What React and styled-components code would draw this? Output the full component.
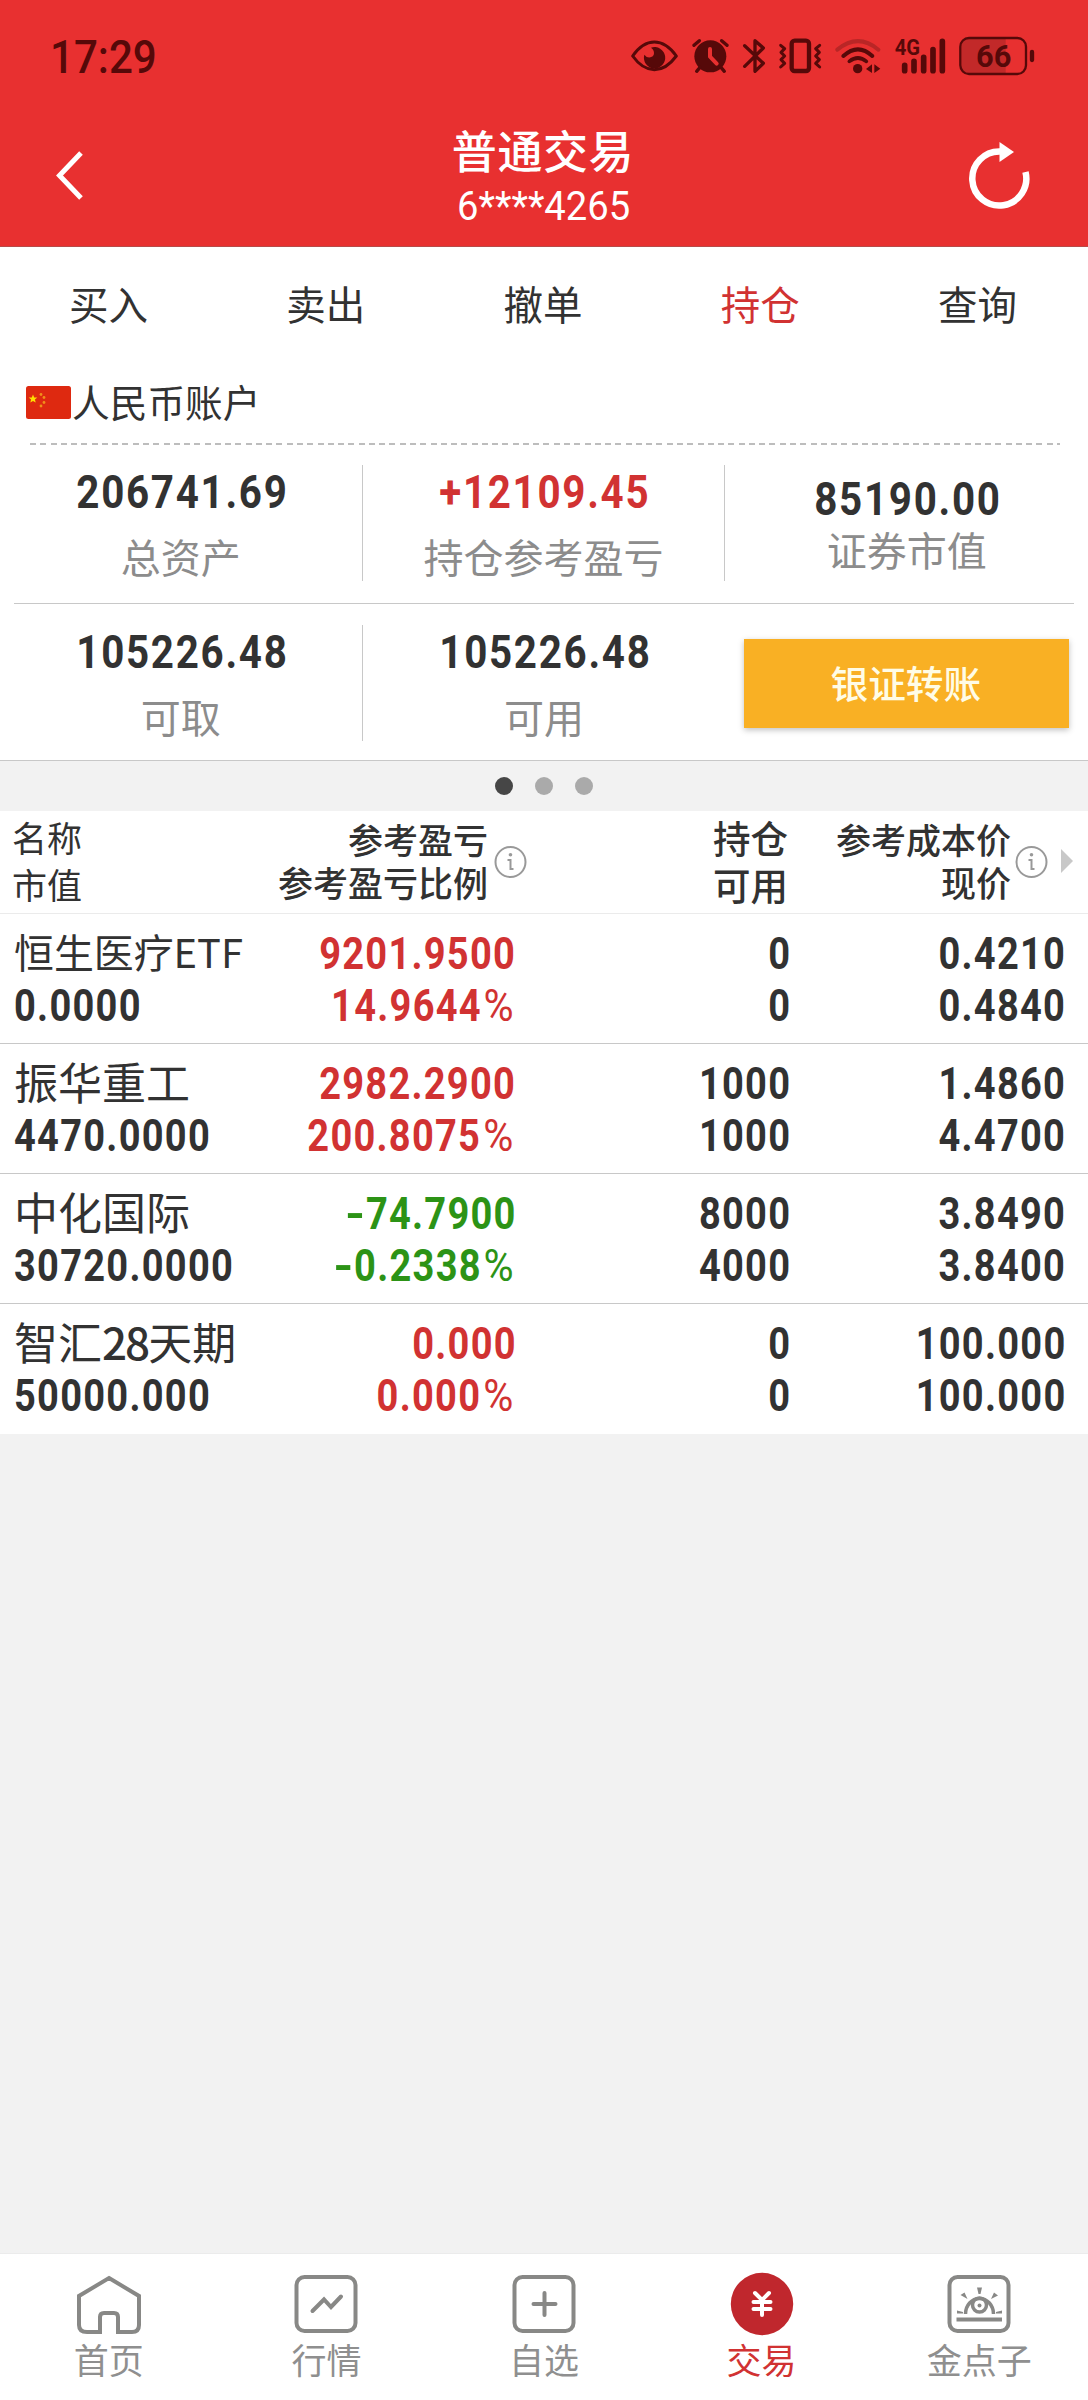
import React from 'react';
import styled, { createGlobalStyle } from 'styled-components';

const GlobalStyle = createGlobalStyle`
    * {
        box-sizing: border-box;
    }

    body {
        margin: 0;
        background: #f2f2f2;
        color: #323232;
        font-family: 'Noto Sans CJK SC', sans-serif;
    }
`;

const INK = '#560909';
const RED = '#d13232';
const GREEN = '#2c9316';

const Page = styled.div`
    display: flex;
    flex-direction: column;
    width: 1088px;
    height: 2400px;
    background: #f2f2f2;
`;

/* header */

const Header = styled.header`
    height: 247px;
    background: #e83030;
    border-bottom: 1px solid #b84a48;
`;

const StatusBar = styled.div`
    display: flex;
    align-items: center;
    justify-content: space-between;
    height: 108px;
    padding: 4px 53px 0 50px;
`;

const Clock = styled.div`
    height: 54px;
    line-height: 58px;
    font-family: Roboto, sans-serif;
    font-weight: 500;
    font-size: 45.5px;
    color: ${INK};
    transform: scaleX(0.925);
    transform-origin: left;
    white-space: nowrap;
`;

const StatusIcons = styled.div`
    display: flex;
    align-items: center;
`;

const TitleBar = styled.div`
    display: grid;
    grid-template-columns: 200px 1fr 200px;
    height: 138px;
`;

const BackButton = styled.div`
    padding: 41px 0 0 53px;
`;

const RefreshButton = styled.div`
    display: flex;
    justify-content: flex-end;
    padding: 28px 53px 0 0;
`;

const Titles = styled.div`
    display: flex;
    flex-direction: column;
    align-items: center;
    padding-top: 12px;
    color: #fff;
`;

const Title = styled.div`
    font-size: 45px;
    line-height: 60px;
    font-weight: 500;
    letter-spacing: 0.6px;
    margin-right: 2px;
`;

const AccountNo = styled.div`
    font-family: Roboto, sans-serif;
    font-size: 40px;
    line-height: 54px;
    transform: scaleX(0.955);
`;

/* tabs */

const Tabs = styled.nav`
    display: flex;
    height: 110px;
    padding-right: 2px;
    background: #fff;
`;

const Tab = styled.div`
    flex: 1;
    text-align: center;
    font-size: 39.5px;
    line-height: 112px;
    color: ${props => (props.$active ? RED : '#323232')};
`;

/* account summary */

const Summary = styled.section`
    height: 404px;
    background: #fff;
    border-bottom: 1px solid #c8c8c8;
`;

const Currency = styled.div`
    display: flex;
    align-items: center;
    height: 86px;
    padding: 5px 0 0 26px;
    font-size: 37.7px;
    line-height: 60px;
`;

const CurrencyName = styled.span`
    margin: -4px 0 0 1px;
`;

const Dashes = styled.div`
    height: 2px;
    margin: 0 28px 0 30px;
    background: repeating-linear-gradient(to right, #bdbdbd 0 6px, transparent 6px 10.27px);
`;

const Figures = styled.div`
    display: grid;
    grid-template-columns: 1fr 1fr 1fr;
    height: ${props => props.$height}px;
    padding-top: ${props => props.$top}px;
`;

const Rule = styled.div`
    height: 1px;
    margin: 0 14px;
    background: #c8c8c8;
`;

const Figure = styled.div`
    display: flex;
    flex-direction: column;
    align-items: center;
    height: 116px;
    gap: ${props => (props.$tight ? 0 : 14)}px;
    padding-top: ${props => (props.$tight ? 7 : 0)}px;
    border-right: ${props => (props.$last ? 'none' : '1px solid #c8c8c8')};
`;

const FigureValue = styled.div`
    font-family: Roboto, sans-serif;
    font-weight: 700;
    font-size: 46.9px;
    line-height: 53px;
    height: 52px;
    letter-spacing: 2px;
    margin-right: -3px;
    transform: scaleX(0.86);
    color: ${props => props.$color || '#323232'};
`;

const FigureLabel = styled.div`
    font-size: 40px;
    line-height: 60px;
    margin-top: -5px;
    color: #8c8c8c;
`;

const TransferButton = styled.div`
    width: 325px;
    height: 89px;
    margin: 14px 0 0 19px;
    background: #f9b024;
    box-shadow: 0 2px 6px rgba(0, 0, 0, 0.25);
    color: #fffce6;
    font-size: 37.7px;
    font-weight: 500;
    line-height: 86px;
    text-align: center;
    text-indent: -2px;
`;

const Pager = styled.div`
    display: flex;
    justify-content: center;
    align-items: center;
    gap: 22px;
    height: 50px;
`;

const Dot = styled.span`
    width: 18px;
    height: 18px;
    border-radius: 50%;
    background: ${props => (props.$active ? '#464646' : '#aaa')};
`;

/* positions table */

const Table = styled.section`
    background: #fff;
`;

const HeadRow = styled.div`
    display: grid;
    grid-template-columns: 200px 327px 261px 300px;
    height: 103px;
    border-bottom: 1px solid #ebebeb;
`;

const HeadCell = styled.div`
    display: flex;
    align-items: center;
    justify-content: ${props => (props.$left ? 'flex-start' : 'flex-end')};
    padding-left: ${props => (props.$left ? 12 : 0)}px;
`;

const HeadText = styled.div`
    font-size: ${props => props.$size || 35}px;
    line-height: ${props => props.$line || 43}px;
    font-weight: ${props => props.$weight || 400};
    text-align: ${props => (props.$left ? 'left' : 'right')};
    white-space: nowrap;
    margin: -5px ${props => props.$gap || 0}px 0 0;
`;

const Row = styled.div`
    display: grid;
    grid-template-columns: 230px 285px 275px 275px;
    height: 130px;
    padding-top: 14px;
    border-bottom: ${props => (props.$last ? 'none' : '1px solid #c8c8c8')};
`;

const Cell = styled.div`
    display: flex;
    flex-direction: column;
    align-items: ${props => (props.$left ? 'flex-start' : 'flex-end')};
    padding-left: ${props => (props.$left ? 14 : 0)}px;
    color: ${props => props.$color || '#323232'};
`;

const StockName = styled.div`
    font-size: ${props => (props.$small ? 39.9 : 44)}px;
    line-height: 46px;
    height: 52px;
    white-space: nowrap;
`;

const NameDigits = styled.span`
    font-weight: 500;
    letter-spacing: -2px;
`;

const Amount = styled.div`
    font-family: Roboto, sans-serif;
    font-weight: 700;
    font-size: 45px;
    line-height: 52px;
    letter-spacing: 1.5px;
    margin-right: -1.5px;
    transform: scaleX(0.845);
    transform-origin: ${props => (props.$left ? 'left' : 'right')};
    white-space: nowrap;
`;

const Percent = styled.span`
    display: inline-block;
    margin: 0 2px 0 5px;
    font-weight: 400;
    transform: scaleX(1.08);
    transform-origin: right;
`;

const Minus = styled.span`
    display: inline-block;
    transform: scaleX(1.35);
    margin: 0 2px 0 4px;
`;

/* bottom bar */

const BottomBar = styled.nav`
    display: flex;
    height: 147px;
    margin-top: auto;
    background: #fff;
    border-top: 1px solid #ebebeb;
`;

const BottomItem = styled.div`
    flex: 1;
    display: flex;
    flex-direction: column;
    align-items: center;
    padding-top: 17px;
    font-size: 35px;
    line-height: 40px;
    color: ${props => (props.$active ? RED : '#8f8f8f')};
`;

const EyeIcon = () => (
    <svg width="47" height="40" viewBox="90 108 141 120">
        <path d="M95 168 Q124 126 160 126 T226 168 Q196 209 160 209 T95 168Z" fill="none" stroke={INK} strokeWidth="9" strokeLinejoin="round" />
        <path d="M150 143 A32 32 0 1 1 130 164 Q137 174 148 172 Q163 168 158 153 Q156 147 150 143Z" fill={INK} />
    </svg>
);

const AlarmIcon = () => (
    <svg width="37" height="40" viewBox="273 108 111 120">
        <circle cx="328" cy="169" r="48" fill={INK} />
        <path d="M279 136 L295 122 M362 122 L378 136" stroke={INK} strokeWidth="10" strokeLinecap="round" />
        <path d="M297 202 L287 214 M360 202 L370 214" stroke={INK} strokeWidth="10" strokeLinecap="round" />
        <path d="M327 147 V170 L347 191" fill="none" stroke="#e83030" strokeWidth="12" strokeLinecap="round" strokeLinejoin="round" />
    </svg>
);

const BluetoothIcon = () => (
    <svg width="24" height="40" viewBox="423 108 72 120">
        <path d="M431 137 L487 190 L462 214 V122 L487 144 L431 199" fill="none" stroke={INK} strokeWidth="10" strokeLinecap="round" strokeLinejoin="round" />
    </svg>
);

const VibrateIcon = () => (
    <svg width="44" height="40" viewBox="532 108 132 120">
        <rect x="573" y="122" width="52" height="91" rx="9" fill="none" stroke={INK} strokeWidth="13" />
        <path d="M540 136 L552 146 L541 157 L552 168 L541 179 L552 190 L540 201" fill="none" stroke={INK} strokeWidth="9" strokeLinecap="round" strokeLinejoin="round" />
        <path d="M657 136 L645 146 L656 157 L645 168 L656 179 L645 190 L657 201" fill="none" stroke={INK} strokeWidth="9" strokeLinecap="round" strokeLinejoin="round" />
    </svg>
);

const WifiIcon = () => (
    <svg width="46" height="40" viewBox="704 108 138 120">
        <path d="M711 149 Q773 98 834 149" fill="none" stroke="#b92626" strokeWidth="12" strokeLinecap="round" />
        <path d="M729 168 Q773 128 816 168" fill="none" stroke={INK} strokeWidth="12" strokeLinecap="round" />
        <path d="M747 184 Q773 164 798 184" fill="none" stroke={INK} strokeWidth="11" strokeLinecap="round" />
        <circle cx="772" cy="206" r="14" fill={INK} />
        <path d="M797 207 L815 193 V219Z M822 193 L840 206 L822 219Z" fill={INK} />
    </svg>
);

const Signal = styled.svg`
    overflow: visible;
`;

const SignalIcon = () => (
    <Signal width="52" height="40" viewBox="880 108 156 120">
        <text x="882" y="165" fontFamily="Roboto, sans-serif" fontWeight="700" fontSize="67" textLength="76" lengthAdjust="spacingAndGlyphs" fill={INK}>
            4G
        </text>
        <path d="M912 196 V212 M940 184 V212 M969 172 V212 M997 149 V212 M1025 124 V212" stroke={INK} strokeWidth="17" strokeLinecap="round" />
    </Signal>
);

const BatteryIcon = () => (
    <svg width="76" height="40" viewBox="1076 108 228 120">
        <path d="M1105 117 H1216 V219 H1105 Q1084 219 1084 198 V138 Q1084 117 1105 117Z" fill="#c22929" />
        <rect x="1080" y="114" width="197" height="108" rx="26" fill="none" stroke={INK} strokeWidth="7" />
        <path d="M1295 156 V180" stroke={INK} strokeWidth="13" strokeLinecap="round" />
        <text x="1127" y="202" fontFamily="Roboto, sans-serif" fontWeight="700" fontSize="93" textLength="106" lengthAdjust="spacingAndGlyphs" fill={INK}>
            66
        </text>
    </svg>
);

const IconGap = styled.span`
    width: ${props => props.$w}px;
`;

const BackIcon = () => (
    <svg width="32" height="54" viewBox="0 0 32 54">
        <path d="M28 4 L6.500 26.500 L28 49" fill="none" stroke="#fff" strokeWidth="5" />
    </svg>
);

const RefreshIcon = () => (
    <svg width="72" height="76" viewBox="0 0 72 76">
        <path d="M37 15.500 A27 27 0 1 0 62.500 36" fill="none" stroke="#fff" strokeWidth="6.500" />
        <path d="M36.500 6 L51 16 L36.500 26Z" fill="#fff" />
    </svg>
);

const FlagIcon = () => (
    <svg width="45" height="33" viewBox="0 0 45 33">
        <rect width="45" height="33" rx="2.500" fill="#de2910" />
        <path d="M7 8.500 L8.200 11.400 L11.300 11.600 L8.900 13.600 L9.700 16.600 L7 15 L4.300 16.600 L5.100 13.600 L2.700 11.600 L5.800 11.400Z" fill="#ffde00" />
        <g fill="#f0901a">
            <circle cx="15" cy="8.500" r="1.400" />
            <circle cx="18" cy="11.500" r="1.400" />
            <circle cx="18" cy="16.500" r="1.400" />
            <circle cx="15" cy="20" r="1.400" />
        </g>
    </svg>
);

const InfoIcon = () => (
    <svg width="33" height="34" viewBox="0 0 33 34">
        <circle cx="16.500" cy="17" r="15" fill="none" stroke="#999" strokeWidth="2" />
        <circle cx="16.500" cy="9.800" r="1.800" fill="#999" />
        <path d="M13.500 15 H16.500 V24 H19.500" fill="none" stroke="#999" strokeWidth="2" />
    </svg>
);

const MoreArrow = styled.span`
    margin: -2px 15px 0 13px;
    border-left: 12px solid #c8c8c8;
    border-top: 12px solid transparent;
    border-bottom: 12px solid transparent;
`;

const HomeIcon = () => (
    <svg width="68" height="68" viewBox="0 0 68 68">
        <path d="M34 7 L64 25 V54 Q64 61 57 61 H43 V46 Q43 42 39 42 H29 Q25 42 25 46 V61 H12 Q4 61 4 54 V25Z" fill="none" stroke="#888886" strokeWidth="4" />
    </svg>
);

const Frame = () => <rect x="4.500" y="6" width="59" height="54" rx="8" fill="none" stroke="#888886" strokeWidth="4" />;

const QuotesIcon = () => (
    <svg width="68" height="68" viewBox="0 0 68 68">
        <Frame />
        <path d="M20.500 40 L32 28.500 L39 36 L49 25.500" fill="none" stroke="#888886" strokeWidth="4" strokeLinecap="round" />
    </svg>
);

const WatchIcon = () => (
    <svg width="68" height="68" viewBox="0 0 68 68">
        <Frame />
        <path d="M23.500 33 H45.500 M34.500 22 V44" stroke="#888886" strokeWidth="4" strokeLinecap="round" />
    </svg>
);

const TradeIcon = () => (
    <svg width="68" height="68" viewBox="0 0 68 68">
        <circle cx="34" cy="33" r="31.200" fill="#c0272d" />
        <path d="M27 22 L34 29 L41 22 M34 29 V44 M25.500 31 H42.500 M25.500 38 H42.500" fill="none" stroke="#fff" strokeWidth="4" strokeLinecap="round" />
    </svg>
);

const IdeaIcon = () => (
    <svg width="68" height="68" viewBox="0 0 68 68">
        <Frame />
        <path d="M11.500 48.500 H57" stroke="#888886" strokeWidth="4" />
        <path d="M20.500 43 A14 15.500 0 0 1 48.500 43" fill="none" stroke="#888886" strokeWidth="3.500" />
        <circle cx="34.500" cy="34" r="7" fill="none" stroke="#888886" strokeWidth="3.500" />
        <circle cx="34.500" cy="34.500" r="2" fill="#888886" />
        <path d="M32 16.500 H37 L35.500 23 H33.500Z M15.500 24 L19.500 21.500 L22.500 28Z M53 24.500 L49 21.500 L46 28Z M12 39.500 L18 41 V42.500 H12Z M57 39.500 L51 41 V42.500 H57Z" fill="#888886" />
    </svg>
);

const tabs = ['买入', '卖出', '撤单', '持仓', '查询'];

const positions = [
    {
        name: '恒生医疗ETF',
        value: '0.0000',
        profit: '9201.9500',
        rate: '14.9644',
        held: '0',
        usable: '0',
        cost: '0.4210',
        price: '0.4840',
    },
    {
        name: '振华重工',
        value: '4470.0000',
        profit: '2982.2900',
        rate: '200.8075',
        held: '1000',
        usable: '1000',
        cost: '1.4860',
        price: '4.4700',
    },
    {
        name: '中化国际',
        value: '30720.0000',
        profit: '-74.7900',
        rate: '-0.2338',
        held: '8000',
        usable: '4000',
        cost: '3.8490',
        price: '3.8400',
    },
    {
        name: '智汇28天期',
        value: '50000.000',
        profit: '0.000',
        rate: '0.000',
        held: '0',
        usable: '0',
        cost: '100.000',
        price: '100.000',
    },
];

const bottomItems = [
    { label: '首页', icon: <HomeIcon /> },
    { label: '行情', icon: <QuotesIcon /> },
    { label: '自选', icon: <WatchIcon /> },
    { label: '交易', icon: <TradeIcon />, active: true },
    { label: '金点子', icon: <IdeaIcon /> },
];

const signed = text =>
    text.startsWith('-') ? (
        <>
            <Minus>-</Minus>
            {text.slice(1)}
        </>
    ) : (
        text
    );

const nameParts = name =>
    name.split(/(\d+)/).map((part, i) => (i % 2 ? <NameDigits key={i}>{part}</NameDigits> : part));

const Position = ({ item, last }) => (
    <Row $last={last}>
        <Cell $left>
            <StockName $small={item.name.length > 6}>{nameParts(item.name)}</StockName>
            <Amount $left>{item.value}</Amount>
        </Cell>
        <Cell $color={item.profit.startsWith('-') ? GREEN : RED}>
            <Amount>{signed(item.profit)}</Amount>
            <Amount>
                {signed(item.rate)}
                <Percent>%</Percent>
            </Amount>
        </Cell>
        <Cell>
            <Amount>{item.held}</Amount>
            <Amount>{item.usable}</Amount>
        </Cell>
        <Cell>
            <Amount>{item.cost}</Amount>
            <Amount>{item.price}</Amount>
        </Cell>
    </Row>
);

const App = () => {
    return (
        <Page>
            <GlobalStyle />
            <Header>
                <StatusBar>
                    <Clock>17:29</Clock>
                    <StatusIcons>
                        <EyeIcon />
                        <IconGap $w={14} />
                        <AlarmIcon />
                        <IconGap $w={13} />
                        <BluetoothIcon />
                        <IconGap $w={12} />
                        <VibrateIcon />
                        <IconGap $w={13} />
                        <WifiIcon />
                        <IconGap $w={13} />
                        <SignalIcon />
                        <IconGap $w={13} />
                        <BatteryIcon />
                    </StatusIcons>
                </StatusBar>
                <TitleBar>
                    <BackButton>
                        <BackIcon />
                    </BackButton>
                    <Titles>
                        <Title>普通交易</Title>
                        <AccountNo>6****4265</AccountNo>
                    </Titles>
                    <RefreshButton>
                        <RefreshIcon />
                    </RefreshButton>
                </TitleBar>
            </Header>
            <Tabs>
                {tabs.map(tab => (
                    <Tab key={tab} $active={tab === '持仓'}>
                        {tab}
                    </Tab>
                ))}
            </Tabs>
            <Summary>
                <Currency>
                    <FlagIcon />
                    <CurrencyName>人民币账户</CurrencyName>
                </Currency>
                <Dashes />
                <Figures $height={158} $top={20}>
                    <Figure>
                        <FigureValue>206741.69</FigureValue>
                        <FigureLabel>总资产</FigureLabel>
                    </Figure>
                    <Figure>
                        <FigureValue $color={RED}>+12109.45</FigureValue>
                        <FigureLabel>持仓参考盈亏</FigureLabel>
                    </Figure>
                    <Figure $tight $last>
                        <FigureValue>85190.00</FigureValue>
                        <FigureLabel>证券市值</FigureLabel>
                    </Figure>
                </Figures>
                <Rule />
                <Figures $height={155} $top={21}>
                    <Figure>
                        <FigureValue>105226.48</FigureValue>
                        <FigureLabel>可取</FigureLabel>
                    </Figure>
                    <Figure $last>
                        <FigureValue>105226.48</FigureValue>
                        <FigureLabel>可用</FigureLabel>
                    </Figure>
                    <TransferButton>银证转账</TransferButton>
                </Figures>
            </Summary>
            <Pager>
                <Dot $active />
                <Dot />
                <Dot />
            </Pager>
            <Table>
                <HeadRow>
                    <HeadCell $left>
                        <HeadText $left $line={47}>
                            名称
                            <br />
                            市值
                        </HeadText>
                    </HeadCell>
                    <HeadCell>
                        <HeadText $gap={6} $weight={500}>
                            参考盈亏
                            <br />
                            参考盈亏比例
                        </HeadText>
                        <InfoIcon />
                    </HeadCell>
                    <HeadCell>
                        <HeadText $size={37.5} $line={47} $weight={500}>
                            持仓
                            <br />
                            可用
                        </HeadText>
                    </HeadCell>
                    <HeadCell>
                        <HeadText $gap={4} $weight={500}>
                            参考成本价
                            <br />
                            现价
                        </HeadText>
                        <InfoIcon />
                        <MoreArrow />
                    </HeadCell>
                </HeadRow>
                {positions.map((item, i) => (
                    <Position key={item.name} item={item} last={i === positions.length - 1} />
                ))}
            </Table>
            <BottomBar>
                {bottomItems.map(item => (
                    <BottomItem key={item.label} $active={item.active}>
                        {item.icon}
                        {item.label}
                    </BottomItem>
                ))}
            </BottomBar>
        </Page>
    );
};

export default App;
